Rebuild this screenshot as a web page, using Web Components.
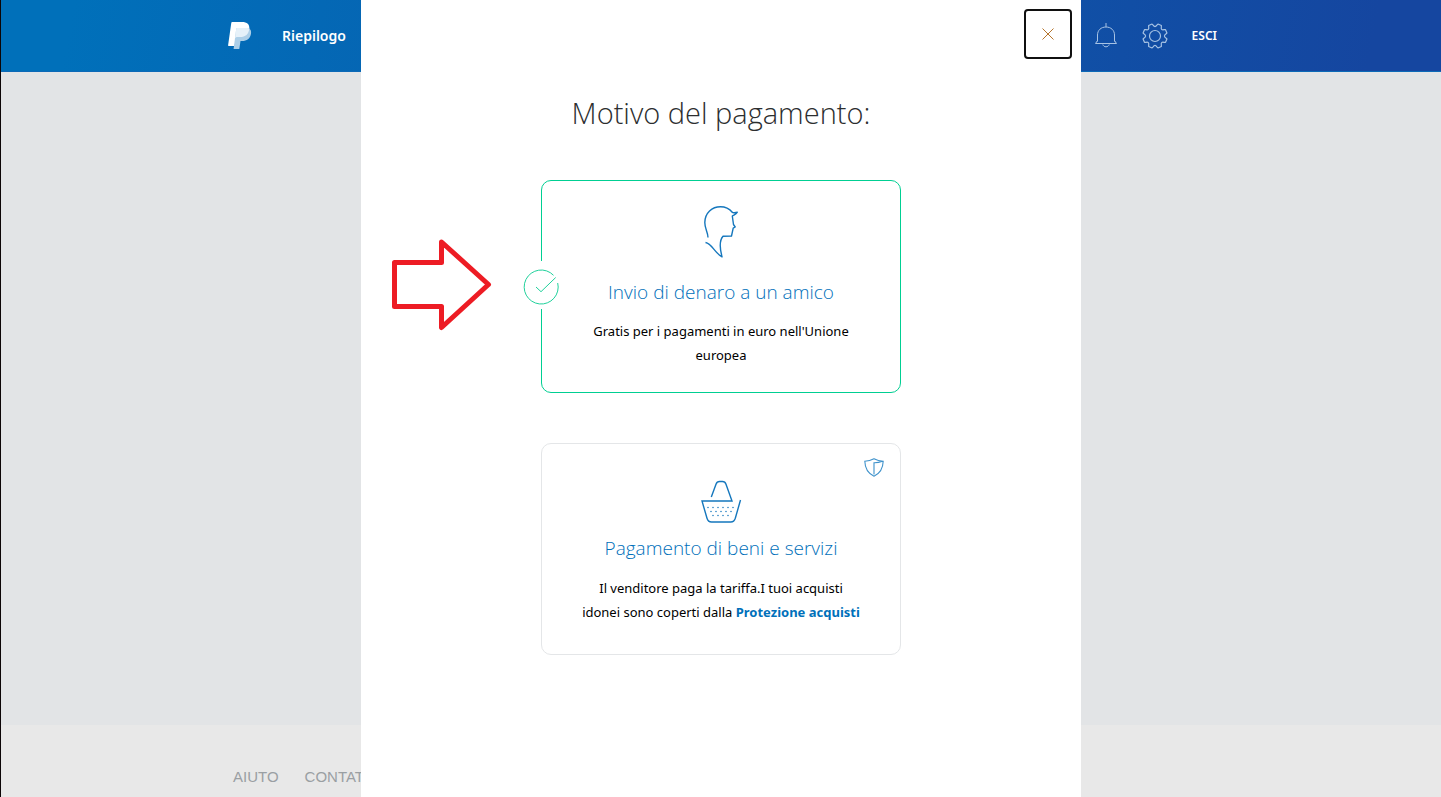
<!DOCTYPE html>
<html lang="it">
<head>
<meta charset="utf-8">
<title>Motivo del pagamento</title>
<style>
  html, body { margin: 0; height: 100%; }
  body { font-family: "Noto Sans", "Open Sans", sans-serif; font-size: 13px; color: #000; overflow: hidden; }
</style>
</head>
<body>
<pay-page>
  <site-header slot="header"></site-header>
  <site-footer slot="footer"></site-footer>
  <reason-dialog slot="dialog" heading="Motivo del pagamento:">
    <reason-card selected heading="Invio di denaro a un amico">
      <friend-icon slot="icon"></friend-icon>
      Gratis per i pagamenti in euro nell'Unione europea
    </reason-card>
    <reason-card heading="Pagamento di beni e servizi">
      <basket-icon slot="icon"></basket-icon>
      <shield-icon slot="corner"></shield-icon>
      Il venditore paga la tariffa.I tuoi acquisti<br>idonei sono coperti dalla <a href="#">Protezione acquisti</a>
    </reason-card>
    <note-arrow slot="note"></note-arrow>
  </reason-dialog>
</pay-page>

<script>
function define(name, html, setup) {
  const template = document.createElement('template');
  template.innerHTML = html;
  customElements.define(name, class extends HTMLElement {
    constructor() {
      super();
      this.attachShadow({ mode: 'open' }).append(template.content.cloneNode(true));
    }
    connectedCallback() { if (setup) setup(this, this.shadowRoot); }
  });
}

define('pay-page', `
<style>
  :host { display: flex; flex-direction: column; min-height: 100%; box-sizing: border-box; position: relative; border-left: 1px solid #0c0506; background: #e2e4e6; }
  main { flex: 1; }
  .layer { position: absolute; inset: 0; display: flex; justify-content: center; }
</style>
<slot name="header"></slot>
<main></main>
<slot name="footer"></slot>
<div class="layer"><slot name="dialog"></slot></div>`);

define('site-header', `
<style>
  :host { display: block; box-sizing: border-box; height: 72px; border-bottom: 1px solid #0c69b7; background: linear-gradient(100deg, #0070ba 0%, #0070ba 5%, #1546a0 95%); color: #fff; }
  nav { display: flex; align-items: center; box-sizing: border-box; max-width: 992px; height: 100%; margin: 0 auto; padding-left: 3px; }
  a { color: inherit; text-decoration: none; font-weight: 600; }
  svg { display: block; }
  .home { margin-right: 30px; }
  .main { flex: 1; font-size: 14px; }
  button { padding: 0; border: 0; background: none; color: inherit; margin-right: 24px; }
  .out { font-size: 12px; }
</style>
<nav>
  <a class="home" href="#" aria-label="PayPal"><svg width="24" height="28" viewBox="0 0 24 28">
    <path fill="#fff" d="M4.2 0H14c5 0 8 2.400 7.300 7.400C20.500 12.900 17 15 12 15H8.300L6.500 24H.7C.2 24 0 23.700.1 23.200L3.300.800C3.400.300 3.700 0 4.200 0Z"/>
    <path fill="#adcfe8" d="M8.200 7C8.300 6.400 8.700 6 9.300 6h10.200c.6 0 1.200.2 1.700.500 1.600 1 2.200 2.700 1.800 5.200-.9 5-4 7.300-9 7.300h-1.500l-1.200 8H5.600Z"/>
    <path fill="#e6f1f9" d="M8.200 7C8.300 6.400 8.700 6 9.300 6h10.200c.6 0 1.200.2 1.700.500C20.900 12.400 17.400 15 12 15H9.300c-1 0-1.800.500-2.200 1.500Z"/>
  </svg></a>
  <span class="main"><a href="#">Riepilogo</a></span>
  <button aria-label="Notifiche"><svg width="24" height="26" viewBox="0 0 24 26" fill="none" stroke="#a7c3e4" stroke-width="1">
    <path d="M12 0v4M3.500 18.500V12C3.500 7.300 7 4 12 4s8.500 3.300 8.500 8v6.500M3.500 17.500 1.500 20.500h21L20.500 17.500M8.800 21.500c.5 1.500 1.700 2.300 3.200 2.300s2.700-.8 3.200-2.300"/>
  </svg></button>
  <button aria-label="Impostazioni"><svg class="gear" width="26" height="26" viewBox="-13 -13 26 26" fill="none" stroke="#a7c3e4" stroke-width="1.200" stroke-linejoin="round"><path/><circle r="5.500"/></svg></button>
  <a class="out" href="#">ESCI</a>
</nav>`, (host, root) => {
  let d = '';
  const polar = (r, a) => (r * Math.cos(a)).toFixed(2) + ' ' + (r * Math.sin(a)).toFixed(2);
  for (let i = 0; i < 8; i++) {
    const a = (i + 0.5) * Math.PI / 4;
    d += (i ? 'L' : 'M') + polar(12.3, a - 0.15) + 'L' + polar(12.3, a + 0.15) +
         'L' + polar(11, a + 0.22) + 'Q' + polar(8, a + Math.PI / 8) + ' ' + polar(11, a + Math.PI / 4 - 0.22);
  }
  root.querySelector('.gear path').setAttribute('d', d + 'Z');
});

define('site-footer', `
<style>
  :host { display: block; box-sizing: border-box; height: 72px; padding-top: 42px; background: #e8e8e8; font-family: "Liberation Sans", Arial, sans-serif; font-size: 15px; line-height: 20px; }
  nav { display: flex; gap: 26px; max-width: 976px; margin: 0 auto; }
  a { color: #9a9fa3; text-decoration: none; }
</style>
<nav><a href="#">AIUTO</a><a href="#">CONTATTI</a></nav>`);

define('reason-dialog', `
<style>
  :host { display: block; box-sizing: border-box; width: 50%; position: relative; background: #fff; padding: 9px 9px 0; }
  .bar { display: flex; justify-content: flex-end; }
  button { display: grid; place-items: center; box-sizing: border-box; width: 48px; height: 50px; padding: 0; border: 2px solid #101010; border-radius: 4px; background: #fff; }
  h1 { margin: 30px 0 0; text-align: center; font-family: "Open Sans", sans-serif; font-size: 29px; line-height: 48px; font-weight: 300; color: #2c2e2f; }
  .cards { display: flex; flex-direction: column; gap: 50px; width: 360px; margin: 43px auto 0; }
</style>
<div class="bar"><button aria-label="Chiudi"><svg width="12" height="12" viewBox="0 0 12 12" stroke="#b5742c" stroke-width="1"><path d="M.5.500l11 11M11.500.500l-11 11"/></svg></button></div>
<h1></h1>
<div class="cards"><slot></slot></div>
<slot name="note"></slot>`, (host, root) => {
  root.querySelector('h1').textContent = host.getAttribute('heading');
});

define('reason-card', `
<style>
  :host { display: block; box-sizing: border-box; position: relative; min-height: 212px; padding: 36px 32px 24px; border: 1px solid #e4e6e8; border-radius: 10px; text-align: center; }
  :host([selected]) { border-color: #00cf92; padding: 24px 36px; min-height: 213px; }
  h2 { margin: 8px 0 12px; font-family: "Open Sans", sans-serif; font-size: 19px; line-height: 32px; font-weight: 300; color: #0070ba; }
  :host([selected]) h2 { margin: 17px 0 11px; }
  p { margin: 0; font-size: 13px; line-height: 24px; }
  ::slotted(a) { color: #0070ba; font-weight: 700; text-decoration: none; }
  .check { display: none; position: absolute; left: -19px; top: 80px; padding: 8px 0 4px; background: #fff; }
  :host([selected]) .check { display: block; }
  .corner { position: absolute; right: 16px; top: 14px; }
  svg { display: block; }
</style>
<span class="check"><svg width="36" height="36" viewBox="0 0 36 36" fill="none" stroke="#1fd19b" stroke-width="1"><path d="M34.700 14A17 17 0 1 1 30.500 6.300M13 18l5 4.700L32.700 8.500"/></svg></span>
<span class="corner"><slot name="corner"></slot></span>
<slot name="icon"></slot>
<h2></h2>
<p><slot></slot></p>`, (host, root) => {
  root.querySelector('h2').textContent = host.getAttribute('heading');
});

define('friend-icon', `
<style>:host { display: block; } svg { display: block; margin: 0 auto; }</style>
<svg width="36" height="54" viewBox="0 0 36 54" fill="none" stroke="#1577bd" stroke-width="1.400" stroke-linejoin="round">
  <path d="M5 32.500C5 27 1.800 24 1.800 17.500 2 8 9 1.800 17.500 1.800c5.500 0 9 2.200 12 5.700.6.600 3 0 4.800-.2-1 2-3 2.600-5 3.700l1.200 8.500 1.700 2.500-2 1.200-1.700 7.800-8.500.2c-3.500 4-3.300 12-1 20.600C11.500 48 9 38.500 2.500 37.500"/>
</svg>`);

define('basket-icon', `
<style>:host { display: block; } svg { display: block; margin: 0 auto; }</style>
<svg width="42" height="44" viewBox="0 0 42 44" fill="none" stroke="#1577bd" stroke-width="1.400">
  <path d="M11.300 17 16 4.200C16.700 2.200 17.800 1.500 19.500 1.500h3c1.700 0 2.800.700 3.500 2.700L32 21H2l5 17.300c.8 2.700 2 3.700 4.500 3.700h19.300c2.500 0 3.700-1.200 4.500-3.700L40.500 20"/>
  <path stroke-linecap="round" stroke-width="1.500" d="M8 27.500h0m5 0h0m5 0h0m5 0h0m5 0h0m5 0h0M11 31.500h0m5 0h0m5 0h0m5 0h0m5 0h0M13 35.500h0m5 0h0m5 0h0m5 0h0"/>
</svg>`);

define('shield-icon', `
<style>:host { display: block; } svg { display: block; }</style>
<svg width="20" height="19" viewBox="0 0 20 19" fill="none" stroke="#3f92cb" stroke-width="1.100">
  <path d="M.8 3.300C4.200 3.200 7 2.500 10 .8c3 1.700 5.800 2.400 9.200 2.500C19 10 16 15.500 10 18.200 4 15.500 1 10 .8 3.300ZM10 16.500V4.800c2.800.1 5.200-.3 8.500-1.500"/>
</svg>`);

define('note-arrow', `
<style>:host { position: absolute; left: 31px; top: 238px; } svg { display: block; }</style>
<svg width="100" height="93" viewBox="0 0 100 93" fill="none" stroke="#ed1c24" stroke-width="5" stroke-linejoin="round">
  <path d="M2.500 24.500H49.500V4L96.500 46.500 49.500 89.500V68.500H2.500Z"/>
</svg>`);
</script>
</body>
</html>
